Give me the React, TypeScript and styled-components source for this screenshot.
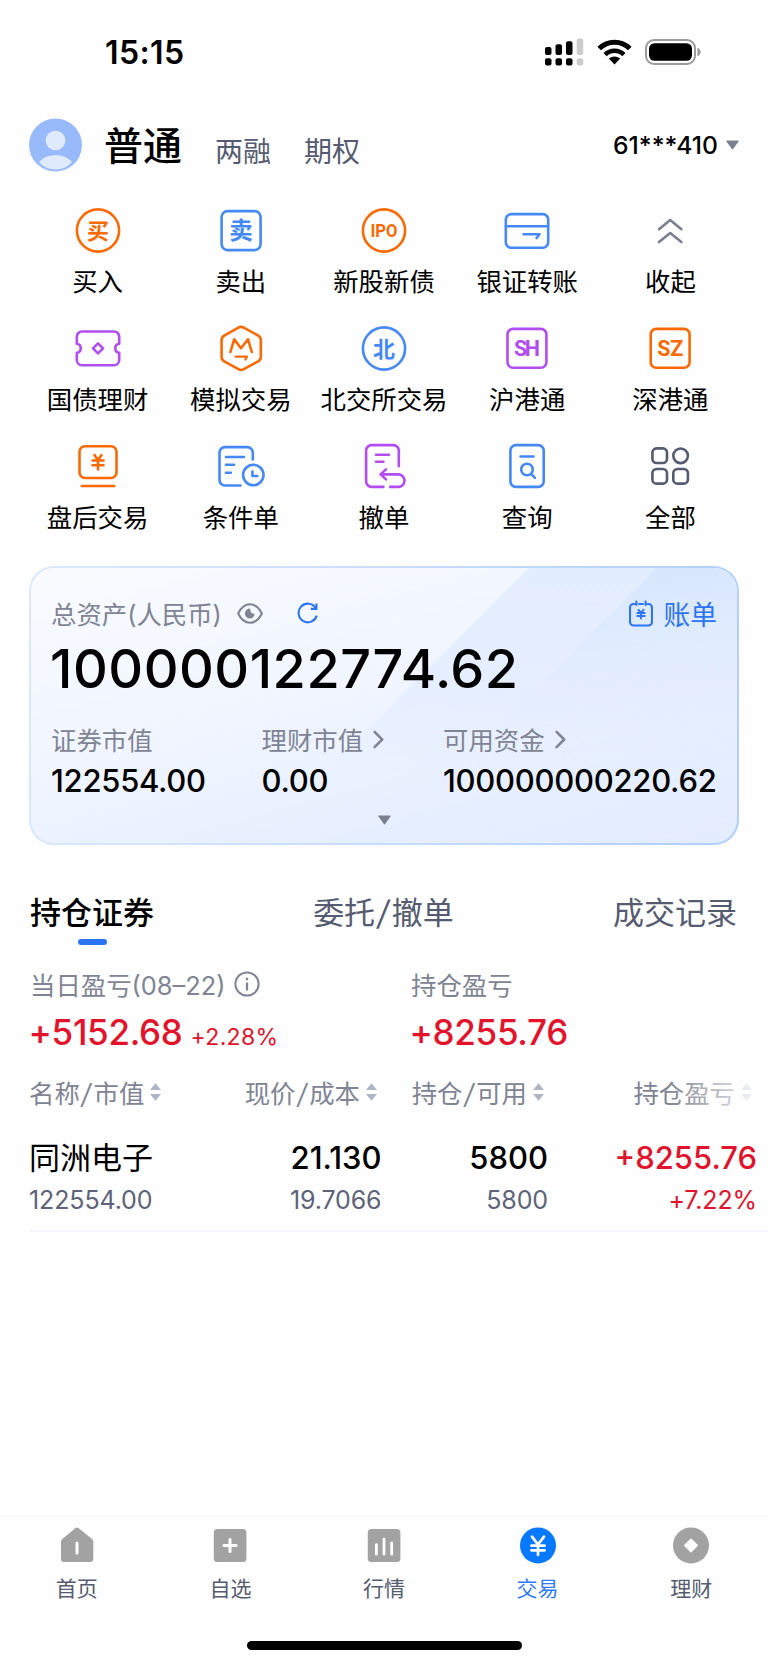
import React from "react";
import styled, { createGlobalStyle } from "styled-components";

const orange = "#f96a05";
const blue = "#4489f5";
const purple = "#b34df2";
const ink = "#555b70";
const muted = "#7f8494";
const red = "#e2132b";

const GlobalStyle = createGlobalStyle`
  * { box-sizing: border-box; }
  body { margin: 0; background: #fefefe; }
  svg { display: block; flex: none; }
`;

const Page = styled.div`
  width: 768px;
  height: 1665px;
  display: flex;
  flex-direction: column;
  overflow: hidden;
  background: #fefefe;
  color: #000;
  font-family: Inter, "Noto Sans CJK SC", sans-serif;
  font-size: 25.4px;
  white-space: nowrap;
`;

const StatusBar = styled.div`
  height: 104px;
  flex: none;
  padding: 0 67px 0 105px;
  display: flex;
  align-items: center;
  justify-content: space-between;
`;

const Clock = styled.div`
  font-size: 32px;
  font-weight: 600;
  line-height: 40px;
  padding-top: 1px;
  letter-spacing: 0.4px;
`;

const StatusIcons = styled.div`
  display: flex;
  align-items: center;
  gap: 13px;
`;

const Header = styled.div`
  height: 82px;
  flex: none;
  padding: 0 29px;
  display: flex;
  align-items: center;
`;

const AccountTab = styled.div<{ $active?: boolean }>`
  font-size: ${(p) => (p.$active ? "39px" : "28px")};
  font-weight: ${(p) => (p.$active ? 500 : 400)};
  color: ${(p) => (p.$active ? "#000" : ink)};
  line-height: 44px;
  margin-left: ${(p) => (p.$active ? "22px" : "33px")};
  padding-top: ${(p) => (p.$active ? "1px" : "13px")};
`;

const Account = styled.div`
  margin-left: auto;
  display: flex;
  align-items: center;
  gap: 8px;
  font-size: 24.7px;
  font-weight: 500;
`;

const Grid = styled.div`
  flex: none;
  padding: 20px 26px 0;
  display: grid;
  grid-template-columns: repeat(5, 1fr);
  grid-auto-rows: 118px;
`;

const GridItem = styled.div`
  display: flex;
  flex-direction: column;
  align-items: center;
  gap: 9px;
  min-width: 0;
  line-height: 37px;
`;

const Card = styled.div`
  position: relative;
  flex: none;
  margin: 6px 29px 0;
  height: 279px;
  padding: 26px 20px 0;
  border: 2px solid transparent;
  border-radius: 25px;
  overflow: hidden;
  background:
    linear-gradient(165deg, #f9fbff 0%, #f0f5ff 45%, #e6efff 78%, #e4edff 100%) padding-box,
    linear-gradient(100deg, #dbe8fd 0%, #c8dcfc 50%, #b0cffc 100%) border-box;
`;

const Sheen = styled.svg`
  position: absolute;
  left: 0;
  top: 0;
`;

const CardBody = styled.div`
  position: relative;
  display: flex;
  flex-direction: column;
`;

const CardTop = styled.div`
  display: flex;
  align-items: center;
  height: 38px;
  color: ${muted};
`;

const CardTitle = styled.span`
  width: 186px;
`;

const RefreshSlot = styled.span`
  margin-left: 33.5px;
`;

const Bill = styled.div`
  margin-left: auto;
  display: flex;
  align-items: center;
  gap: 10px;
  font-size: 26.8px;
  color: #2b75f3;
`;

const Total = styled.div`
  font-size: 54px;
  font-weight: 500;
  line-height: 66px;
  margin-top: 4px;
  margin-left: -1px;
  letter-spacing: 0.5px;
`;

const Figures = styled.div`
  display: grid;
  grid-template-columns: 210.5px 181.5px 1fr;
  margin-top: 19px;
`;

const FigureLabel = styled.div`
  display: flex;
  align-items: center;
  gap: 10px;
  height: 36px;
  color: ${muted};
`;

const FigureValue = styled.div`
  font-size: 31px;
  font-weight: 500;
  line-height: 40px;
  margin-top: 4px;
  letter-spacing: -0.27px;
`;

const Expand = styled.div`
  display: flex;
  justify-content: center;
  margin-top: 14px;
`;

const Tabs = styled.div`
  flex: none;
  display: flex;
  justify-content: space-between;
  padding: 0 31px 0 30px;
  margin-top: 48px;
  height: 63px;
  font-size: 31px;
  line-height: 40px;
`;

const Tab = styled.div<{ $active?: boolean }>`
  display: flex;
  flex-direction: column;
  align-items: center;
  gap: 6px;
  font-weight: ${(p) => (p.$active ? 500 : 400)};
  color: ${(p) => (p.$active ? "#000" : ink)};
  &::after {
    content: "";
    width: 29px;
    height: 6px;
    border-radius: 3px;
    background: ${(p) => (p.$active ? "#2b75f3" : "transparent")};
  }
`;

const Slash = styled.span`
  display: inline-block;
  margin: 0 0.09em;
  transform: skewX(-9deg) scaleY(1.08);
`;

const Profit = styled.div`
  flex: none;
  display: grid;
  grid-template-columns: 381px 1fr;
  padding: 0 30px;
  margin-top: 10px;
`;

const ProfitLabel = styled.div`
  display: flex;
  align-items: center;
  gap: 9px;
  height: 36px;
  color: ${muted};
`;

const ProfitValue = styled.div`
  display: flex;
  align-items: baseline;
  gap: 8px;
  margin: 8px 0 0 -1.5px;
  font-size: 35px;
  font-weight: 500;
  line-height: 44px;
  letter-spacing: -0.3px;
  color: ${red};
  small {
    font-size: 23px;
    font-weight: 400;
    letter-spacing: 0.3px;
  }
`;

const TableHead = styled.div`
  position: relative;
  flex: none;
  display: grid;
  grid-template-columns: 130px 218px 167px 1fr;
  padding: 0 16px 0 29px;
  margin-top: 14px;
  height: 38px;
  color: ${muted};
  &::after {
    content: "";
    position: absolute;
    right: 0;
    top: 0;
    width: 100px;
    height: 38px;
    background: linear-gradient(90deg, rgba(254, 254, 254, 0), rgba(254, 254, 254, 0.95));
  }
`;

const HeadCell = styled.div<{ $left?: boolean }>`
  display: flex;
  align-items: center;
  gap: 6px;
  justify-content: ${(p) => (p.$left ? "flex-start" : "flex-end")};
`;

const Row = styled.div`
  flex: none;
  display: grid;
  grid-template-columns: 134px 218.5px 166.5px 1fr;
  margin: 27px 0 0 29px;
  padding-right: 11px;
  height: 94px;
  border-bottom: 2px solid #f4f6fb;
`;

const Cell = styled.div<{ $red?: boolean; $left?: boolean }>`
  display: flex;
  flex-direction: column;
  align-items: ${(p) => (p.$left ? "flex-start" : "flex-end")};
  color: ${(p) => (p.$red ? red : "#000")};
  b {
    font-size: 31px;
    font-weight: ${(p) => (p.$left ? 400 : 500)};
    line-height: 40px;
  }
  span {
    font-size: 25px;
    line-height: 34px;
    margin-top: 5px;
    letter-spacing: -0.12px;
    color: ${(p) => (p.$red ? red : "#5d6379")};
  }
`;

const NavBar = styled.nav`
  flex: none;
  margin-top: auto;
  height: 149px;
  border-top: 1px solid #f4f4f5;
  display: flex;
  flex-direction: column;
  align-items: center;
`;

const NavItems = styled.div`
  align-self: stretch;
  display: grid;
  grid-template-columns: repeat(5, 1fr);
  padding-top: 9px;
`;

const NavItem = styled.div<{ $active?: boolean }>`
  display: flex;
  flex-direction: column;
  align-items: center;
  gap: 10px;
  font-size: 21px;
  line-height: 30px;
  color: ${(p) => (p.$active ? "#2f7bf6" : ink)};
`;

const HomeIndicator = styled.div`
  width: 275px;
  height: 9px;
  border-radius: 5px;
  background: #000;
  margin-top: 37px;
`;

const IconSvg = ({ color, children }: { color: string; children: React.ReactNode }) => (
  <svg width="48" height="48" viewBox="0 0 48 48" fill="none" stroke={color} strokeWidth="2.6" strokeLinecap="round" strokeLinejoin="round">
    {children}
  </svg>
);

const IconText = styled.text<{ $size: number }>`
  font-family: Roboto, "Noto Sans CJK SC", sans-serif;
  font-size: ${(p) => p.$size}px;
  font-weight: 700;
  stroke: none;
  text-anchor: middle;
`;

const actions: { label: string; icon: React.ReactNode }[] = [
  {
    label: "买入",
    icon: (
      <IconSvg color={orange}>
        <circle cx="24" cy="24.5" r="21.1" />
        <IconText $size={22} x="24" y="32.7" fill={orange}>买</IconText>
      </IconSvg>
    ),
  },
  {
    label: "卖出",
    icon: (
      <IconSvg color={blue}>
        <rect x="4.6" y="5.1" width="39" height="39" rx="6" />
        <IconText $size={23.5} x="24" y="33.4" fill={blue}>卖</IconText>
      </IconSvg>
    ),
  },
  {
    label: "新股新债",
    icon: (
      <IconSvg color={orange}>
        <circle cx="24" cy="24.5" r="21.1" />
        <IconText $size={18.4} x="24" y="31" textLength="27" lengthAdjust="spacingAndGlyphs" fill={orange}>IPO</IconText>
      </IconSvg>
    ),
  },
  {
    label: "银证转账",
    icon: (
      <IconSvg color={blue}>
        <rect x="2.8" y="8.1" width="42.4" height="33.6" rx="5.5" />
        <path d="M3 20.3H45M20.5 28.3H36.5L33.6 32" />
      </IconSvg>
    ),
  },
  {
    label: "收起",
    icon: (
      <IconSvg color="#7b8090">
        <path d="M13 23.2 24.2 14 35.4 23.2M13 36 24.2 27 35.4 36" />
      </IconSvg>
    ),
  },
  {
    label: "国债理财",
    icon: (
      <IconSvg color={purple}>
        <path d="M8 7.5H40A5.2 5.2 0 0 1 45.2 12.7V19.8A4.6 4.6 0 0 0 45.2 28.9V36A5.2 5.2 0 0 1 40 41.2H8A5.2 5.2 0 0 1 2.8 36V28.9A4.6 4.6 0 0 0 2.8 19.8V12.7A5.2 5.2 0 0 1 8 7.5Z" />
        <path d="M24 19.4 29 24.4 24 29.4 19 24.4Z" />
      </IconSvg>
    ),
  },
  {
    label: "模拟交易",
    icon: (
      <IconSvg color={orange}>
        <path d="M21.4 3.6Q24.1 2.1 26.8 3.6L41.2 11.6Q43.8 13.1 43.8 16V33Q43.8 35.8 41.2 37.3L26.8 45.2Q24.1 46.7 21.4 45.2L7.2 37.3Q4.6 35.8 4.6 33V16Q4.6 13.1 7.2 11.6Z" />
        <path d="M13.4 28 17.2 15.3 24 24.2 31 15.3 34.8 28" />
        <path d="M18.6 32.7H30L28.4 35.3" strokeWidth="2.2" />
      </IconSvg>
    ),
  },
  {
    label: "北交所交易",
    icon: (
      <IconSvg color={blue}>
        <circle cx="24" cy="24.5" r="21.1" />
        <IconText $size={22} x="24" y="32.5" fill={blue}>北</IconText>
      </IconSvg>
    ),
  },
  {
    label: "沪港通",
    icon: (
      <IconSvg color={purple}>
        <rect x="4.5" y="4.9" width="38.9" height="38.9" rx="5.5" />
        <IconText $size={21.5} x="24" y="32.1" textLength="26" lengthAdjust="spacing" fill={purple}>SH</IconText>
      </IconSvg>
    ),
  },
  {
    label: "深港通",
    icon: (
      <IconSvg color={orange}>
        <rect x="4.7" y="4.9" width="38.9" height="38.9" rx="5.5" />
        <IconText $size={21.5} x="24.2" y="32.1" textLength="26" lengthAdjust="spacing" fill={orange}>SZ</IconText>
      </IconSvg>
    ),
  },
  {
    label: "盘后交易",
    icon: (
      <IconSvg color={orange}>
        <rect x="5.5" y="4.2" width="37" height="31.8" rx="5.5" />
        <path d="M7.8 44H40.2" />
        <path d="M20.5 13 24 18.3 27.5 13M24 18.3V27.5M18.5 18.5H29.5M18.5 23.2H29.5" />
      </IconSvg>
    ),
  },
  {
    label: "条件单",
    icon: (
      <IconSvg color={blue}>
        <path d="M35.8 17.5V10.6A5.5 5.5 0 0 0 30.3 5.1H8A5.5 5.5 0 0 0 2.5 10.6V38A5.5 5.5 0 0 0 8 43.5H23.5" />
        <path d="M9 15H27M9 22.7H17M9 30.7H13.8" />
        <circle cx="36.3" cy="33" r="10.2" />
        <path d="M35.4 29.5V34H40.3" />
      </IconSvg>
    ),
  },
  {
    label: "撤单",
    icon: (
      <IconSvg color={purple}>
        <path d="M38.8 24.3V8.6A5.5 5.5 0 0 0 33.3 3.1H11.6A5.5 5.5 0 0 0 6.1 8.6V39.4A5.5 5.5 0 0 0 11.6 44.9H23.4" />
        <path d="M16 12.7H29M16 19.7H23.4" />
        <path d="M26 27.4 20.5 32.4 26 37.4M20.8 32.4H38.2A6.2 6.2 0 0 1 38.2 44.9H30.2" />
      </IconSvg>
    ),
  },
  {
    label: "查询",
    icon: (
      <IconSvg color={blue}>
        <rect x="7.4" y="3.1" width="33.3" height="41.8" rx="5.5" />
        <path d="M17.6 14.5H30.5" />
        <circle cx="24" cy="27.5" r="5.8" />
        <path d="M28.3 32.2 31.9 35.8" />
      </IconSvg>
    ),
  },
  {
    label: "全部",
    icon: (
      <IconSvg color={ink}>
        <rect x="6.4" y="6.4" width="14.6" height="14.6" rx="4.2" />
        <circle cx="34.6" cy="13.8" r="7.3" />
        <rect x="6.4" y="27" width="14.6" height="14.6" rx="4.2" />
        <rect x="27.3" y="27" width="14.6" height="14.6" rx="4.2" />
      </IconSvg>
    ),
  },
];

const Signal = () => (
  <svg width="39" height="28" viewBox="0 0 39 28">
    <rect x="0" y="9" width="6.5" height="8" rx="2" />
    <rect x="10.5" y="6.3" width="6.5" height="10.7" rx="2" />
    <rect x="21" y="3.3" width="6.5" height="13.7" rx="2" />
    <rect x="31.7" y="0.5" width="6.5" height="16.5" rx="2" fill="#ccc" />
    <rect x="0" y="20.3" width="6.5" height="7.2" rx="2" />
    <rect x="10.5" y="20.3" width="6.5" height="7.2" rx="2" />
    <rect x="21" y="20.3" width="6.5" height="7.2" rx="2" />
    <rect x="31.7" y="20.3" width="6.5" height="7.2" rx="2" fill="#ccc" />
  </svg>
);

const Wifi = () => (
  <svg width="35" height="26" viewBox="0 0 35 26" fill="none" stroke="#000" strokeWidth="5">
    <path d="M2.2 9.6A21.6 21.6 0 0 1 32.8 9.6" />
    <path d="M8.1 15.6A13.4 13.4 0 0 1 26.9 15.6" strokeWidth="4.6" />
    <path d="M17.5 25.4 11.8 19.6Q17.5 15.2 23.2 19.6Z" fill="#000" stroke="none" />
  </svg>
);

const Battery = () => (
  <svg width="56" height="26" viewBox="0 0 56 26">
    <rect x="1" y="1" width="49" height="24" rx="8" fill="none" stroke="#9c9c9c" strokeWidth="2" />
    <rect x="4" y="4.2" width="43" height="17.6" rx="5.5" />
    <path d="M52.4 8.8Q55.6 10 55.6 13T52.4 17.2Z" fill="#9c9c9c" />
  </svg>
);

const Avatar = () => (
  <svg width="53" height="54" viewBox="0 0 53 54">
    <circle cx="26.5" cy="27" r="26.5" fill="#99bafa" />
    <circle cx="26.5" cy="22.5" r="9.8" fill="#dfebfd" />
    <path d="M10 44Q16.5 37 26.5 37T43 44Q36.5 51.6 26.5 51.6T10 44Z" fill="#dfebfd" />
  </svg>
);

const Down = ({ color = "#7b8090" }: { color?: string }) => (
  <svg width="13" height="10" viewBox="0 0 13 10">
    <path d="M0.8 1H12.2L6.5 8.8Z" fill={color} stroke={color} strokeWidth="1.2" strokeLinejoin="round" />
  </svg>
);

const Eye = () => (
  <svg width="26" height="21" viewBox="0 0 26 21" fill="none" stroke={muted} strokeWidth="2.1">
    <path d="M1.2 10.5Q5.5 1.3 13 1.3T24.8 10.5Q20.5 19.7 13 19.7T1.2 10.5Z" strokeLinejoin="round" />
    <path d="M13 5.6A4.9 4.9 0 1 0 17.7 10.8Q13.4 11.2 13 5.6Z" fill={muted} stroke="none" />
  </svg>
);

const Refresh = () => (
  <svg width="22" height="22" viewBox="0 0 22 22" fill="none" stroke="#2b75f3" strokeWidth="2.1">
    <path d="M19.8 13.6A9.3 9.3 0 1 1 18.6 5.8M19.4 1.6V6.9H13.8" />
  </svg>
);

const BillIcon = () => (
  <svg width="24" height="27" viewBox="0 0 24 27" fill="none" stroke="#2b75f3" strokeWidth="2.1" strokeLinecap="round">
    <path d="M4.5 4H5.5M10 4H14M18.5 4H19.5A3.5 3.5 0 0 1 23 7.5V21.7A3.8 3.8 0 0 1 19.2 25.5H4.8A3.8 3.8 0 0 1 1 21.7V7.5A3.5 3.5 0 0 1 4.5 4M7.4 1.5V5M16.6 1.5V5" />
    <path d="M9.5 9.8 12 12.8 14.5 9.8M12 13V18.5M8.3 13H15.7M8.3 16H15.7" strokeWidth="1.9" />
  </svg>
);

const Chevron = () => (
  <svg width="11" height="19" viewBox="0 0 11 19" fill="none" stroke={muted} strokeWidth="2.5" strokeLinecap="round" strokeLinejoin="round">
    <path d="M1.6 1.8 9.2 9.5 1.6 17.2" />
  </svg>
);

const Info = () => (
  <svg width="26" height="26" viewBox="0 0 26 26" fill="none" stroke={muted} strokeWidth="2">
    <circle cx="13" cy="13" r="11.6" />
    <path d="M13 11.5V19.6M13 6.8V9.2" strokeWidth="2.2" />
  </svg>
);

const Sort = () => (
  <svg width="11" height="18" viewBox="0 0 11 18" fill="#aeb5c4">
    <path d="M5.5 0.3 11 7H0Z" />
    <path d="M5.5 17.7 11 11H0Z" />
  </svg>
);

const gray = "#a2a2a2";
const navItems = [
  {
    label: "首页",
    icon: (
      <svg width="38" height="38" viewBox="0 0 38 38">
        <path d="M17.3 2.2Q19 0.8 20.7 2.2L34 13Q35.3 14.2 35.3 16V33Q35.3 36 32.3 36H6Q3 36 3 33V16Q3 14.2 4.3 13Z" fill={gray} />
        <path d="M19 17V27" stroke="#fff" strokeWidth="3" strokeLinecap="round" />
      </svg>
    ),
  },
  {
    label: "自选",
    icon: (
      <svg width="38" height="38" viewBox="0 0 38 38">
        <rect x="2.8" y="3" width="32.6" height="33" rx="3.5" fill={gray} />
        <path d="M19 13.4V25.6M12.9 19.5H25.1" stroke="#fff" strokeWidth="3" strokeLinecap="round" />
      </svg>
    ),
  },
  {
    label: "行情",
    icon: (
      <svg width="38" height="38" viewBox="0 0 38 38">
        <rect x="2.8" y="3" width="32.6" height="33" rx="3.5" fill={gray} />
        <path d="M11.4 18.6V28.2M19 13.2V28.2M26.7 17V28.2" stroke="#fff" strokeWidth="2.8" strokeLinecap="round" />
      </svg>
    ),
  },
  {
    label: "交易",
    active: true,
    icon: (
      <svg width="38" height="38" viewBox="0 0 38 38">
        <circle cx="19" cy="19.4" r="18" fill="#0679ff" />
        <path d="M13 10.6 19 18.6 25 10.6M19 18.6V29M12.4 19.6H25.6M12.4 24.3H25.6" stroke="#fff" strokeWidth="2.7" strokeLinecap="round" fill="none" />
      </svg>
    ),
  },
  {
    label: "理财",
    icon: (
      <svg width="38" height="38" viewBox="0 0 38 38">
        <circle cx="19" cy="19.4" r="18" fill={gray} />
        <path d="M19 13.2 25.2 19.4 19 25.6 12.8 19.4Z" fill="#fff" stroke="#fff" strokeWidth="1.5" strokeLinejoin="round" />
      </svg>
    ),
  },
];

const headings: [string, string][] = [
  ["名称", "市值"],
  ["现价", "成本"],
  ["持仓", "可用"],
];

export default function App() {
  return (
    <Page>
      <GlobalStyle />
      <StatusBar>
        <Clock>15:15</Clock>
        <StatusIcons>
          <Signal />
          <Wifi />
          <Battery />
        </StatusIcons>
      </StatusBar>
      <Header>
        <Avatar />
        <AccountTab $active>普通</AccountTab>
        <AccountTab>两融</AccountTab>
        <AccountTab>期权</AccountTab>
        <Account>
          61***410
          <Down />
        </Account>
      </Header>
      <Grid>
        {actions.map((a) => (
          <GridItem key={a.label}>
            {a.icon}
            {a.label}
          </GridItem>
        ))}
      </Grid>
      <Card>
        <Sheen width="706" height="275" viewBox="0 0 706 275">
          <defs>
            <linearGradient id="band" x1="0" y1="0" x2="0" y2="1">
              <stop offset="0" stopColor="#e2edff" />
              <stop offset="0.6" stopColor="#e3edff" stopOpacity="0.75" />
              <stop offset="1" stopColor="#e4edff" stopOpacity="0" />
            </linearGradient>
            <linearGradient id="corner" x1="0" y1="0" x2="0.15" y2="1">
              <stop offset="0" stopColor="#d5e5fc" />
              <stop offset="1" stopColor="#e0ebff" stopOpacity="0" />
            </linearGradient>
          </defs>
          <path d="M498 0H706V210H288Z" fill="url(#band)" />
          <path d="M626 0H706V160H466Z" fill="url(#corner)" />
        </Sheen>
        <CardBody>
          <CardTop>
            <CardTitle>总资产(人民币)</CardTitle>
            <Eye />
            <RefreshSlot>
              <Refresh />
            </RefreshSlot>
            <Bill>
              <BillIcon />
              账单
            </Bill>
          </CardTop>
          <Total>100000122774.62</Total>
          <Figures>
            <div>
              <FigureLabel>证券市值</FigureLabel>
              <FigureValue>122554.00</FigureValue>
            </div>
            <div>
              <FigureLabel>
                理财市值
                <Chevron />
              </FigureLabel>
              <FigureValue>0.00</FigureValue>
            </div>
            <div>
              <FigureLabel>
                可用资金
                <Chevron />
              </FigureLabel>
              <FigureValue>100000000220.62</FigureValue>
            </div>
          </Figures>
          <Expand>
            <Down />
          </Expand>
        </CardBody>
      </Card>
      <Tabs>
        <Tab $active>持仓证券</Tab>
        <Tab>
          <span>
            委托<Slash>/</Slash>撤单
          </span>
        </Tab>
        <Tab>成交记录</Tab>
      </Tabs>
      <Profit>
        <div>
          <ProfitLabel>
            当日盈亏(08–22)
            <Info />
          </ProfitLabel>
          <ProfitValue>
            +5152.68<small>+2.28%</small>
          </ProfitValue>
        </div>
        <div>
          <ProfitLabel>持仓盈亏</ProfitLabel>
          <ProfitValue>+8255.76</ProfitValue>
        </div>
      </Profit>
      <TableHead>
        {headings.map(([first, second], i) => (
          <HeadCell key={first} $left={i === 0}>
            <span>
              {first}
              <Slash>/</Slash>
              {second}
            </span>
            <Sort />
          </HeadCell>
        ))}
        <HeadCell>
          持仓盈亏
          <Sort />
        </HeadCell>
      </TableHead>
      <Row>
        <Cell $left>
          <b>同洲电子</b>
          <span>122554.00</span>
        </Cell>
        <Cell>
          <b>21.130</b>
          <span>19.7066</span>
        </Cell>
        <Cell>
          <b>5800</b>
          <span>5800</span>
        </Cell>
        <Cell $red>
          <b>+8255.76</b>
          <span>+7.22%</span>
        </Cell>
      </Row>
      <NavBar>
        <NavItems>
          {navItems.map((n) => (
            <NavItem key={n.label} $active={n.active}>
              {n.icon}
              {n.label}
            </NavItem>
          ))}
        </NavItems>
        <HomeIndicator />
      </NavBar>
    </Page>
  );
}
